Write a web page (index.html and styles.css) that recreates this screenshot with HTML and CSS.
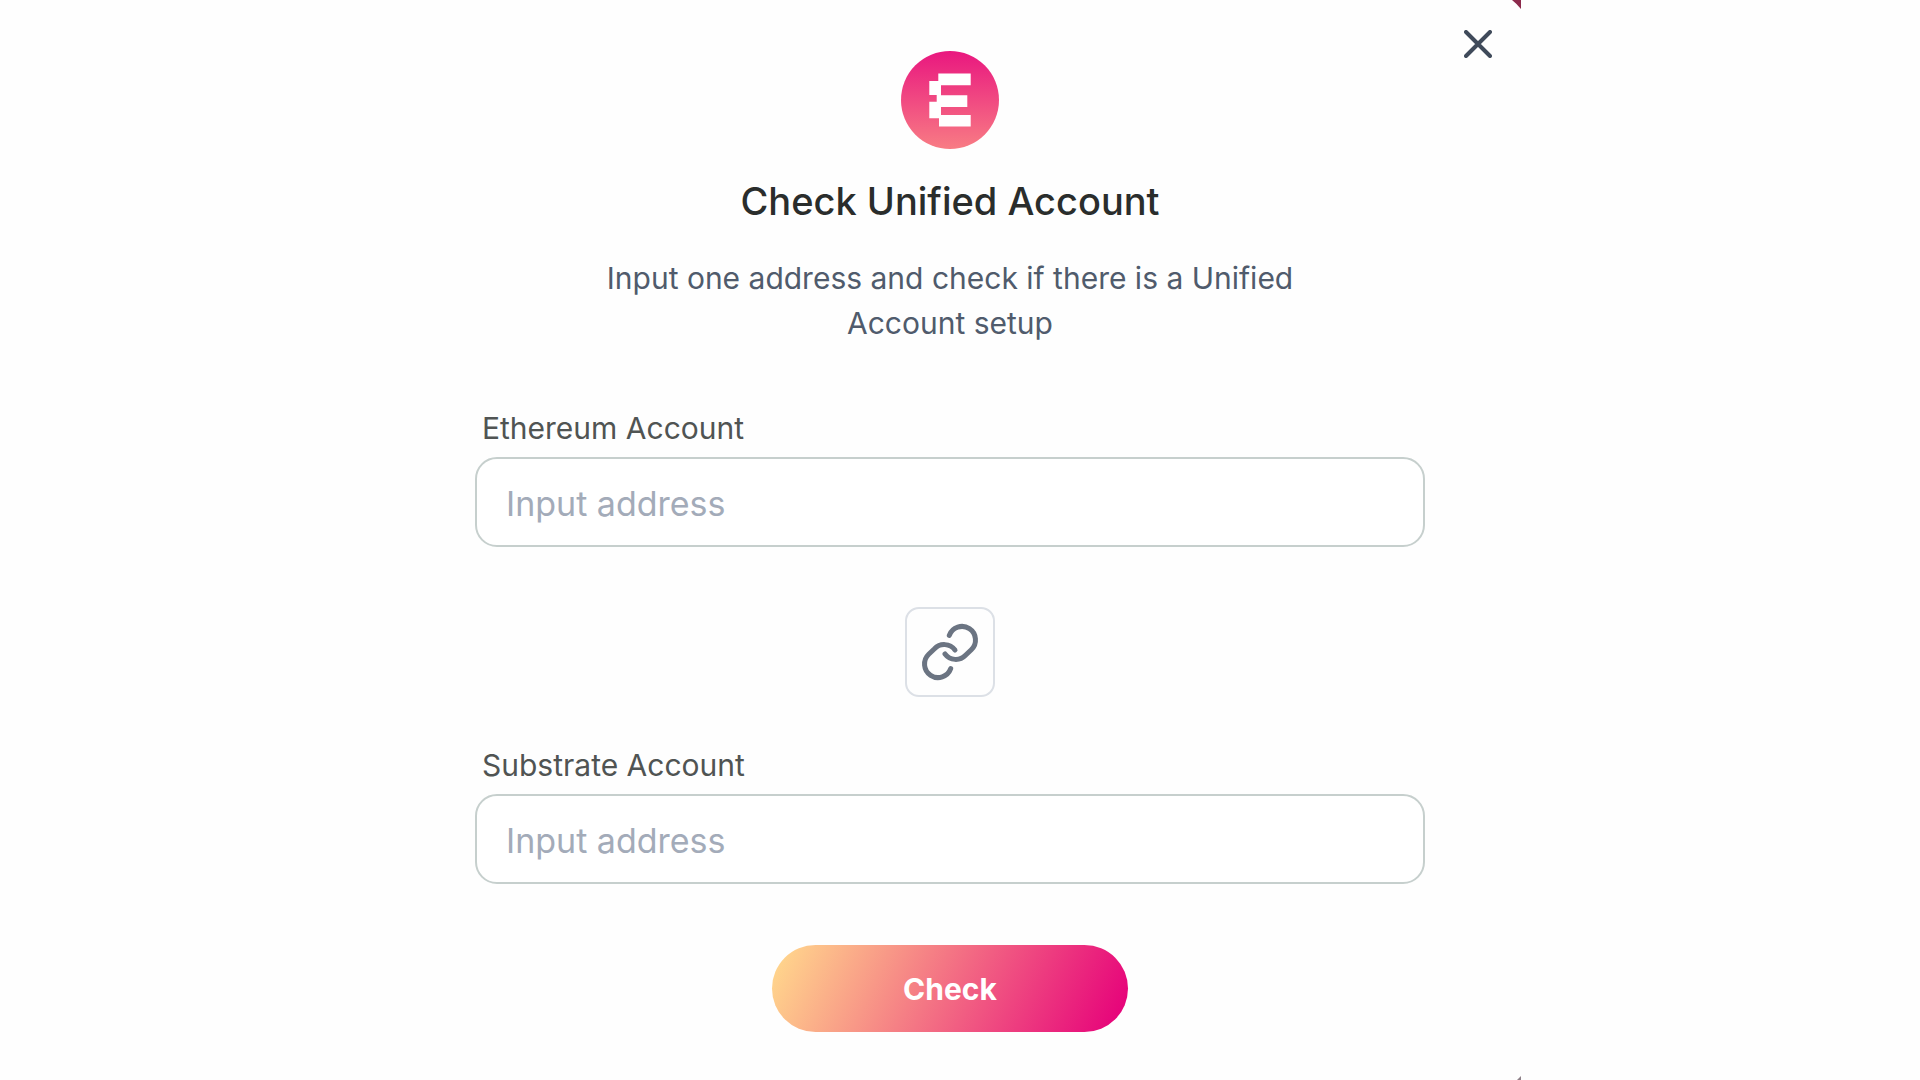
FILE: index.html
```html
<!DOCTYPE html>
<html lang="en">
<head>
<meta charset="utf-8">
<meta name="viewport" content="width=device-width, initial-scale=1">
<title>Check Unified Account</title>
<link rel="stylesheet" href="styles.css">
</head>
<body>
<main class="dialog">
  <svg class="corner corner-top" viewBox="0 0 10 10" aria-hidden="true"><path d="M1 0H10V9Q6 4 1 0Z"/></svg>
  <svg class="corner corner-bottom" viewBox="0 0 4 4" aria-hidden="true"><path d="M0 4L4 0V4Z"/></svg>
  <button class="close" type="button" aria-label="Close">
    <svg viewBox="0 0 28 28"><path d="M2 2L26 26M26 2L2 26"/></svg>
  </button>
  <header class="intro">
    <svg class="logo" viewBox="0 0 98 98" aria-hidden="true">
      <defs>
        <linearGradient id="logo-fill" x1="0" y1="0" x2="0" y2="1">
          <stop offset="0" stop-color="#e9177f"/>
          <stop offset="1" stop-color="#f87c84"/>
        </linearGradient>
      </defs>
      <circle cx="49" cy="49" r="49" fill="url(#logo-fill)"/>
      <path fill="#fff" d="M37.3 22.5H69.7V34.3H40V44.3H66.3V56H40V64H69.7V75.5H38V67.3H28.3V50.7H35.7V44H28.3V30H37.3Z"/>
    </svg>
    <h1 class="title">Check Unified Account</h1>
    <p class="subtitle">Input one address and check if there is a Unified Account setup</p>
  </header>
  <form class="form">
    <div class="field">
      <label class="label" for="ethereum">Ethereum Account</label>
      <input class="input" id="ethereum" type="text" placeholder="Input address">
    </div>
    <div class="link-box">
      <svg viewBox="2 2 86 86" aria-hidden="true"><path d="M44.3 28.3A13.5 13.5 0 1 1 66.3 42.7L60.5 48.3A13.5 13.5 0 0 1 40 47M45.7 61.7A13.5 13.5 0 1 1 23.7 47.3L29.5 41.7A13.5 13.5 0 0 1 50 43"/></svg>
    </div>
    <div class="field">
      <label class="label" for="substrate">Substrate Account</label>
      <input class="input" id="substrate" type="text" placeholder="Input address">
    </div>
    <button class="submit" type="button">Check</button>
  </form>
</main>
</body>
</html>
```
FILE: styles.css
```css
* {
  box-sizing: border-box;
}

body {
  margin: 0;
  padding-right: 20px;
  background: #fefefe;
  font-family: Inter, "Liberation Sans", sans-serif;
  font-optical-sizing: none;
}

.dialog {
  position: relative;
  max-width: 1142px;
  min-height: 100vh;
  margin: 0 auto;
  padding: 51px 96px 48px;
}

.corner {
  position: absolute;
  right: 0;
}

.corner-top {
  top: 0;
  width: 10px;
  height: 10px;
  fill: #8c2a4c;
}

.corner-bottom {
  bottom: 0;
  width: 4px;
  height: 4px;
  fill: #8d8088;
}

.close {
  position: absolute;
  top: 30px;
  right: 29px;
  width: 28px;
  height: 28px;
  padding: 0;
  border: 0;
  background: none;
}

.close svg {
  display: block;
  fill: none;
  stroke: #3f4a5a;
  stroke-width: 4;
  stroke-linecap: round;
}

.intro {
  display: flex;
  flex-direction: column;
  align-items: center;
  text-align: center;
}

.logo {
  width: 98px;
  height: 98px;
}

.title {
  margin: 24px 0 0;
  font-size: 38px;
  line-height: 56px;
  font-weight: 500;
  color: #2a2d2c;
}

.subtitle {
  max-width: 720px;
  margin: 27px 0 0;
  font-size: 30px;
  line-height: 45px;
  color: #505b6c;
}

.form {
  display: flex;
  flex-direction: column;
  align-items: center;
  margin-top: 61px;
}

.field {
  display: flex;
  flex-direction: column;
  gap: 8px;
  width: 100%;
}

.label {
  padding-left: 7px;
  font-size: 30px;
  line-height: 42px;
  color: #505453;
}

.input {
  width: 100%;
  height: 90px;
  padding: 2px 29px 0;
  border: 2px solid #c6cfcd;
  border-radius: 22px;
  background: #fff;
  font: inherit;
  font-size: 34px;
  color: #2a2d2c;
}

.input::placeholder {
  color: #a3abb9;
  opacity: 1;
}

.link-box {
  width: 90px;
  height: 90px;
  margin: 60px 0 47px;
  border: 2px solid #dce0e6;
  border-radius: 14px;
}

.link-box svg {
  display: block;
  fill: none;
  stroke: #6b7482;
  stroke-width: 5;
  stroke-linecap: round;
  stroke-linejoin: round;
}

.submit {
  width: 356px;
  height: 87px;
  margin-top: 61px;
  border: 0;
  border-radius: 44px;
  background: linear-gradient(115deg, #ffd38c 4%, #e6007a 98%);
  font: inherit;
  font-size: 30px;
  font-weight: 700;
  color: #fff;
}
```
